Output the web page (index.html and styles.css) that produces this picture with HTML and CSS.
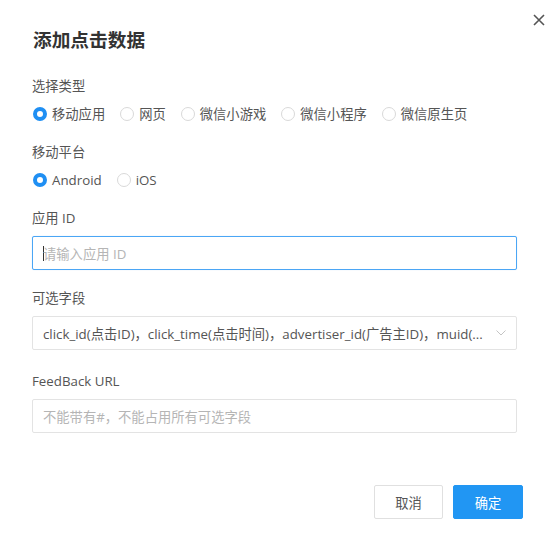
FILE: index.html
```html
<!DOCTYPE html>
<html lang="zh-CN">
<head>
<meta charset="utf-8">
<title>添加点击数据</title>
<link rel="stylesheet" href="styles.css">
</head>
<body>
<div class="modal">
  <button class="close" aria-label="关闭">
    <svg width="12" height="12" viewBox="0 0 12 12"><path d="M1 1L11 11M11 1L1 11" stroke="#555" stroke-width="1.6" fill="none"/></svg>
  </button>
  <div class="modal-header">
    <h1 class="title">添加点击数据</h1>
  </div>
  <div class="modal-body">
    <div class="form-item">
      <div class="label">选择类型</div>
      <div class="radio-group">
        <label class="radio"><span class="dot checked"></span><span>移动应用</span></label>
        <label class="radio"><span class="dot"></span><span>网页</span></label>
        <label class="radio"><span class="dot"></span><span>微信小游戏</span></label>
        <label class="radio"><span class="dot"></span><span>微信小程序</span></label>
        <label class="radio"><span class="dot"></span><span>微信原生页</span></label>
      </div>
    </div>
    <div class="form-item">
      <div class="label">移动平台</div>
      <div class="radio-group">
        <label class="radio"><span class="dot checked"></span><span>Android</span></label>
        <label class="radio"><span class="dot"></span><span>iOS</span></label>
      </div>
    </div>
    <div class="form-item">
      <div class="label">应用 ID</div>
      <div class="input focused"><span class="caret"></span><span class="placeholder">请输入应用 ID</span></div>
    </div>
    <div class="form-item wide">
      <div class="label">可选字段</div>
      <div class="input select">
        <span class="value">click_id(点击ID)，click_time(点击时间)，advertiser_id(广告主ID)，muid(...</span>
        <svg class="chevron" width="10" height="6" viewBox="0 0 10 6"><path d="M0.5 0.5L5 5L9.5 0.5" stroke="#c4c4c4" stroke-width="1" fill="none"/></svg>
      </div>
    </div>
    <div class="form-item last">
      <div class="label">FeedBack URL</div>
      <div class="input"><span class="placeholder">不能带有#，不能占用所有可选字段</span></div>
    </div>
  </div>
  <div class="modal-footer">
    <button class="btn">取消</button>
    <button class="btn primary">确定</button>
  </div>
</div>
</body>
</html>
```

FILE: styles.css
```css
* { box-sizing: border-box; }
html, body { margin: 0; padding: 0; background: #fff; }
body {
  font-family: "Open Sans", "Noto Sans CJK SC", sans-serif;
  font-size: 13.3px;
  color: #555;
}
.modal {
  position: relative;
  width: 551px;
  height: 548px;
  background: #fff;
}
.close {
  position: absolute;
  top: 14px;
  left: 533px;
  width: 12px;
  height: 12px;
  padding: 0;
  border: 0;
  background: none;
  display: flex;
}
.modal-header { padding: 26px 32px 0 33px; }
.title {
  margin: 0;
  font-size: 18.7px;
  line-height: 26px;
  font-weight: 700;
  color: #333;
  font-family: "Noto Sans CJK SC", sans-serif;
}
.modal-body { padding: 24px 34px 0 32px; }
.form-item { margin-bottom: 18px; }
.form-item.wide { margin-bottom: 21px; }
.form-item.last { margin-bottom: 0; }
.label {
  line-height: 20px;
  margin-bottom: 8px;
  color: #555;
}
.radio-group {
  display: flex;
  align-items: center;
  line-height: 20px;
}
.radio {
  display: inline-flex;
  align-items: center;
  margin-right: 14px;
  color: #555;
}
.dot {
  width: 14px;
  height: 14px;
  border-radius: 50%;
  border: 1px solid #d9d9d9;
  background: #fff;
  margin-right: 5px;
  margin-left: 1px;
}
.dot.checked { border: 4.5px solid #1f8ff3; }
.input {
  height: 34px;
  border: 1px solid #e3e3e3;
  border-radius: 2px;
  display: flex;
  align-items: center;
  padding: 0 10px;
  background: #fff;
}
.input.focused { border-color: #4ba6f5; box-shadow: 0 0 1px rgba(75,166,245,0.4); }
.caret {
  width: 1px;
  height: 15px;
  background: #333;
  margin-right: -1px;
}
.placeholder { color: #b5b5b5; }
.select { justify-content: space-between; }
.value {
  color: #555;
  white-space: nowrap;
  overflow: hidden;
  text-overflow: ellipsis;
  flex: 1;
}
.chevron { flex: none; margin-left: 8px; margin-right: 0; }
.modal-footer {
  display: flex;
  justify-content: flex-end;
  gap: 10px;
  padding: 52px 28px 0 0;
}
.btn {
  width: 69px;
  height: 34px;
  border: 1px solid #e0e0e0;
  border-radius: 2px;
  background: #fff;
  font-family: "Open Sans", "Noto Sans CJK SC", sans-serif;
  font-size: 13.3px;
  color: #555;
  padding: 0;
}
.btn.primary {
  width: 70px;
  background: #2196f3;
  border-color: #2196f3;
  color: #fff;
}
```
